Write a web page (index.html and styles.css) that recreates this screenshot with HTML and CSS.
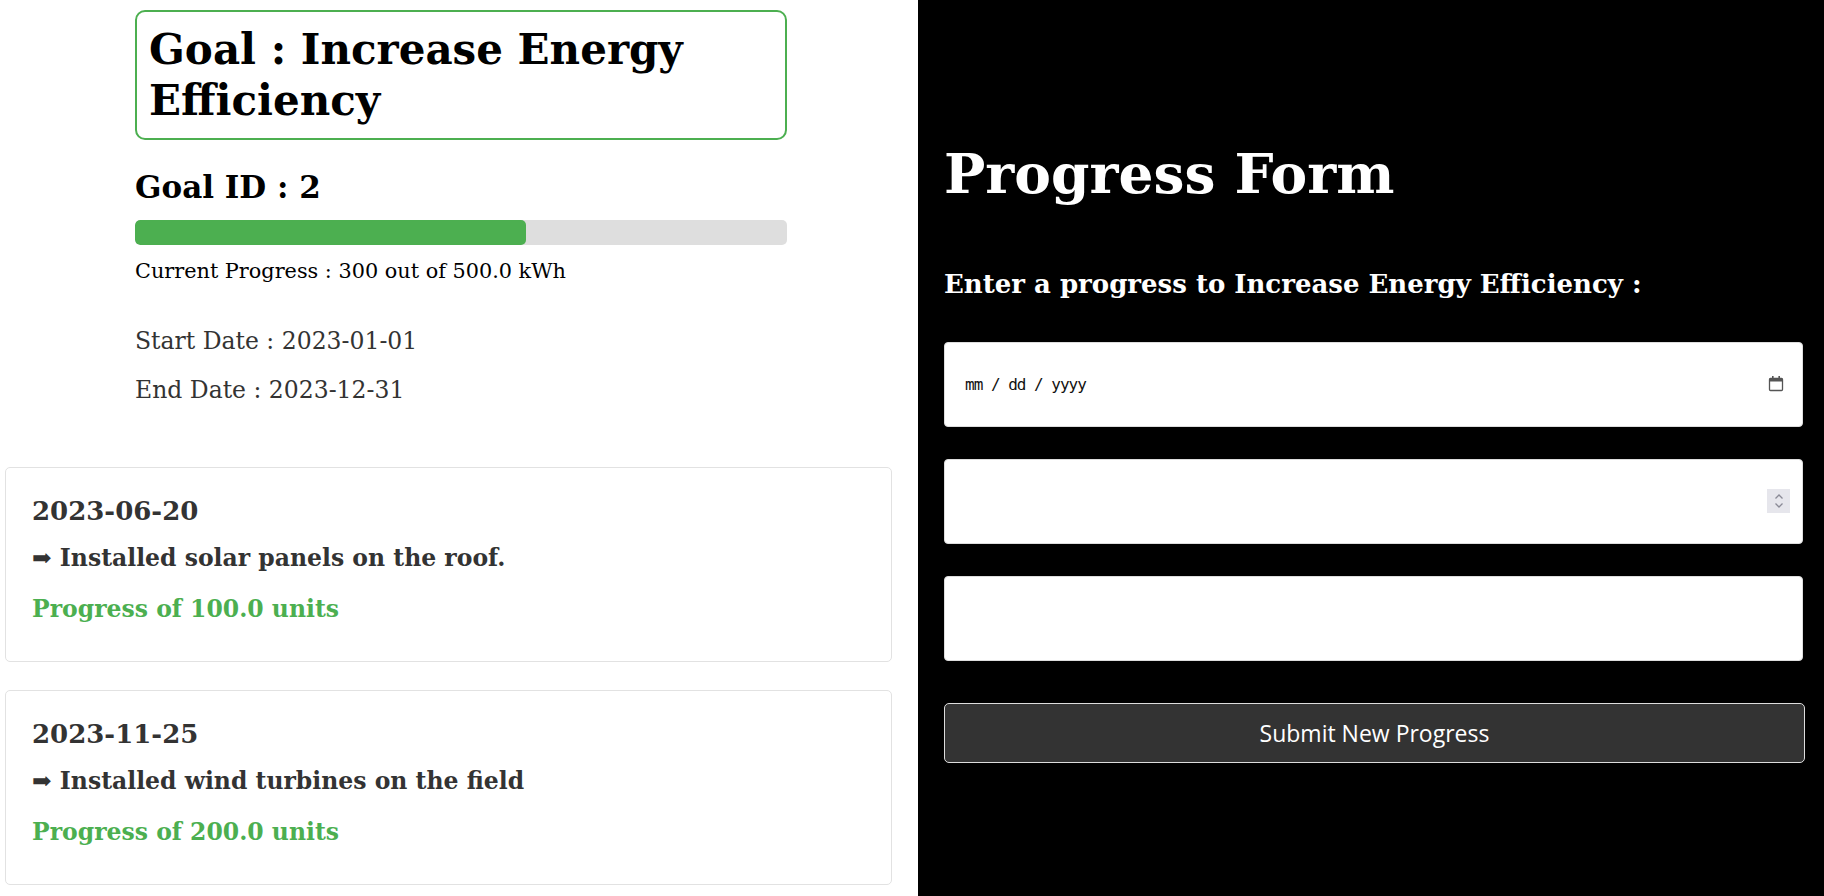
FILE: index.html
```html
<!DOCTYPE html>
<html lang="en">
<head>
<meta charset="utf-8">
<title>Goal Progress</title>
<link rel="stylesheet" href="styles.css">
</head>
<body>
<main class="page">
  <section class="goal-panel">
    <div class="goal-summary">
      <div class="goal-box">
        <h1 class="goal-title">Goal : Increase Energy Efficiency</h1>
      </div>
      <h2 class="goal-id">Goal ID : 2</h2>
      <div class="bar"><div class="bar-fill" style="width:60%"></div></div>
      <p class="current">Current Progress : 300 out of 500.0 kWh</p>
      <p class="date start">Start Date : 2023-01-01</p>
      <p class="date end">End Date : 2023-12-31</p>
    </div>
    <div class="entries">
      <article class="entry">
        <h3 class="entry-date">2023-06-20</h3>
        <p class="entry-text">➡ Installed solar panels on the roof.</p>
        <p class="entry-amount">Progress of 100.0 units</p>
      </article>
      <article class="entry">
        <h3 class="entry-date">2023-11-25</h3>
        <p class="entry-text">➡ Installed wind turbines on the field</p>
        <p class="entry-amount">Progress of 200.0 units</p>
      </article>
    </div>
  </section>
  <section class="form-panel">
    <h1 class="form-title">Progress Form</h1>
    <h3 class="form-subtitle">Enter a progress to Increase Energy Efficiency :</h3>
    <form class="form">
      <div class="field-wrap">
        <input class="field field-date" type="text" placeholder="mm / dd / yyyy">
        <span class="calendar"><svg width="16" height="17" viewBox="0 0 16 17"><rect x="1.5" y="3.5" width="13" height="12" rx="1" fill="none" stroke="#555" stroke-width="1.3"/><rect x="1.5" y="3.5" width="13" height="3" fill="#555"/><rect x="4" y="1" width="1.6" height="3" fill="#555"/><rect x="10.4" y="1" width="1.6" height="3" fill="#555"/></svg></span>
      </div>
      <div class="field-wrap">
        <input class="field" type="number">
        <span class="spinner"><svg width="14" height="20" viewBox="0 0 14 20"><path d="M3.5 7.5 L7 4 L10.5 7.5" fill="none" stroke="#8a8a96" stroke-width="1.3"/><path d="M3.5 12.5 L7 16 L10.5 12.5" fill="none" stroke="#8a8a96" stroke-width="1.3"/></svg></span>
      </div>
      <input class="field" type="text">
      <button class="submit" type="button">Submit New Progress</button>
    </form>
  </section>
</main>
</body>
</html>
```
FILE: styles.css
```css
* { box-sizing: border-box; }
html, body { margin: 0; padding: 0; }
body {
  font-family: "DejaVu Serif", serif;
  background: #fff;
}
.page {
  display: flex;
  height: 896px;
  overflow: hidden;
}
.goal-panel {
  width: 918px;
  flex: none;
  padding: 10px 26px 0 5px;
}
.goal-summary {
  width: 652px;
  margin-left: 130px;
}
.goal-box {
  border: 2px solid #4caf50;
  border-radius: 10px;
  padding: 12px 12px;
}
.goal-title {
  margin: 0;
  font-size: 42px;
  line-height: 51px;
  font-weight: bold;
  color: #000;
}
.goal-id {
  margin: 29px 0 0;
  font-size: 31px;
  line-height: 37px;
  color: #000;
}
.bar {
  margin-top: 14px;
  height: 25px;
  background: #dedede;
  border-radius: 5px;
  overflow: hidden;
}
.bar-fill {
  height: 100%;
  background: #4caf50;
  border-radius: 5px;
}
.current {
  margin: 15px 0 0;
  font-size: 20.8px;
  line-height: 22px;
  color: #000;
}
.date {
  margin: 0;
  font-size: 23.5px;
  line-height: 26px;
  color: #333;
}
.start { margin-top: 46px; }
.end { margin-top: 23px; }
.entries {
  margin-top: 64px;
  display: flex;
  flex-direction: column;
  gap: 28px;
}
.entry {
  border: 1px solid #e2e2e2;
  border-radius: 5px;
  padding: 28px 26px 38px;
  color: #333;
}
.entry-date {
  margin: 0;
  font-size: 26px;
  line-height: 30px;
}
.entry-text {
  margin: 19px 0 0;
  font-size: 23.5px;
  line-height: 27px;
  font-weight: bold;
}
.entry-amount {
  margin: 24px 0 0;
  font-size: 23.5px;
  line-height: 27px;
  font-weight: bold;
  color: #4caf50;
}
.form-panel {
  flex: 1;
  background: #000;
  color: #fff;
  padding: 141px 19px 0 26px;
}
.form-title {
  margin: 0;
  font-size: 55px;
  line-height: 65px;
}
.form-subtitle {
  margin: 64px 0 0;
  font-size: 26px;
  line-height: 29px;
}
.form {
  margin-top: 43px;
  display: flex;
  flex-direction: column;
  gap: 32px;
  width: 861px;
}
.field-wrap { position: relative; }
.field {
  display: block;
  width: 859px;
  height: 85px;
  border: 1px solid #ddd;
  border-radius: 4px;
  background: #fff;
  padding: 0 20px;
  font-family: "DejaVu Sans Mono", monospace;
  font-size: 16px;
  letter-spacing: -1px;
  color: #000;
  outline: none;
}
.field::placeholder { color: #111; opacity: 1; }
.field::-webkit-inner-spin-button { -webkit-appearance: none; display: none; }
.calendar {
  position: absolute;
  right: 21px;
  top: 33px;
  width: 16px;
  height: 17px;
  display: flex;
}
.spinner {
  position: absolute;
  right: 15px;
  top: 30px;
  width: 23px;
  height: 24px;
  background: #e6e6ec;
  display: flex;
  align-items: center;
  justify-content: center;
}
.submit {
  margin-top: 10px;
  width: 861px;
  height: 60px;
  background: #333;
  color: #fff;
  border: 1px solid #ddd;
  border-radius: 5px;
  font-family: "Open Sans", sans-serif;
  font-size: 23px;
}
```
